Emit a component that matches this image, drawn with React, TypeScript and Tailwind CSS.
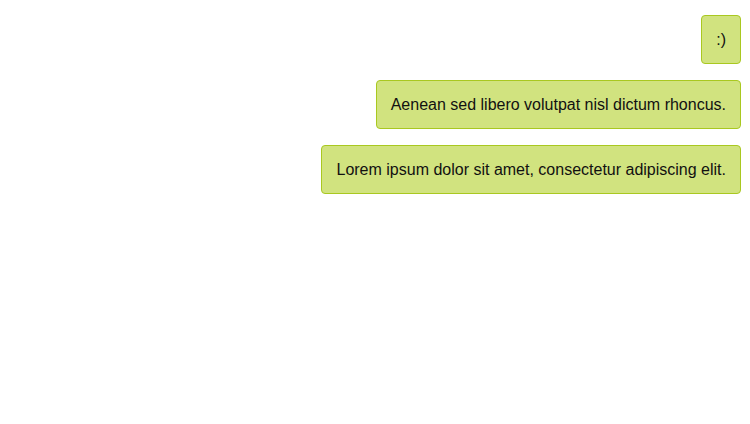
import React from 'react';

const messages = [
  ":)",
  "Aenean sed libero volutpat nisl dictum rhoncus.",
  "Lorem ipsum dolor sit amet, consectetur adipiscing elit.",
];

const App: React.FC = () => {
  return (
    <div className="w-[750px] h-[424px] bg-white font-['Liberation_Sans',Arial,sans-serif]">
      <div className="flex flex-col items-end gap-4 pt-[15px] pr-[9px]">
        {messages.map((text, index) => (
          <div
            key={index}
            className="rounded-[4px] border border-[#a9c820] bg-[#d1e37f] px-[14px] py-[14px] text-[16px] leading-[19px] text-[#111]"
          >
            {text}
          </div>
        ))}
      </div>
    </div>
  );
};

export default App;
